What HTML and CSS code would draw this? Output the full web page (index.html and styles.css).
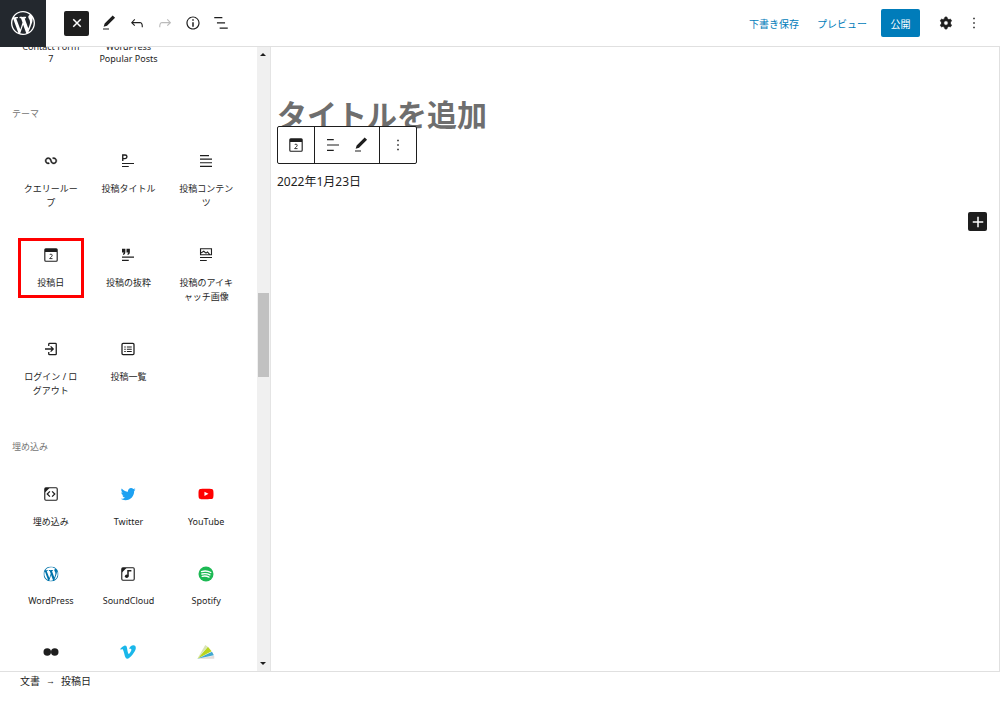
FILE: index.html
```html
<!DOCTYPE html>
<html lang="ja">
<head>
<meta charset="utf-8">
<meta name="viewport" content="width=device-width, initial-scale=1">
<title>投稿を編集</title>
<link rel="stylesheet" href="styles.css">
</head>
<body>
<svg class="defs" aria-hidden="true">
  <symbol id="wp" viewBox="0 0 20 20"><path d="M20 10c0-5.51-4.49-10-10-10C4.48 0 0 4.49 0 10c0 5.52 4.48 10 10 10 5.51 0 10-4.48 10-10zM7.78 15.37L4.37 6.22c.55-.02 1.17-.08 1.17-.08.5-.06.44-1.13-.06-1.11 0 0-1.45.11-2.37.11-.18 0-.37 0-.58-.01C4.12 2.69 6.87 1.11 10 1.11c2.33 0 4.45.87 6.05 2.34-.68-.11-1.65.39-1.65 1.58 0 .74.45 1.36.9 2.1.35.61.55 1.36.55 2.46 0 1.49-1.4 5-1.4 5l-3.03-8.37c.54-.02.82-.17.82-.17.5-.05.44-1.25-.06-1.22 0 0-1.44.12-2.38.12-.87 0-2.33-.12-2.33-.12-.5-.03-.56 1.2-.06 1.22l.92.08 1.26 3.41zM17.41 10c.24-.64.74-1.87.43-4.25.7 1.29 1.05 2.71 1.05 4.25 0 3.29-1.73 6.24-4.4 7.78.97-2.59 1.94-5.2 2.92-7.78zM6.1 18.09C3.12 16.65 1.11 13.53 1.11 10c0-1.3.23-2.48.72-3.59C3.25 10.3 4.67 14.2 6.1 18.09zm4.03-6.63l2.58 6.98c-.86.29-1.76.45-2.71.45-.79 0-1.57-.11-2.29-.33.81-2.38 1.62-4.74 2.42-7.1z"/></symbol>
  <symbol id="edit" viewBox="0 0 24 24"><path d="M20.1 5.1L16.9 2 6.2 12.7l-1.3 4.4 4.5-1.3L20.1 5.1zM4 20.8h8v-1.5H4v1.5z"/></symbol>
  <symbol id="more" viewBox="0 0 24 24"><path d="M13 19h-2v-2h2v2zm0-6h-2v-2h2v2zm0-6h-2V5h2v2z"/></symbol>
  <symbol id="date" viewBox="0 0 24 24"><path fill-rule="evenodd" d="M5 3h14a2 2 0 0 1 2 2v14a2 2 0 0 1-2 2H5a2 2 0 0 1-2-2V5a2 2 0 0 1 2-2zm-.5 5v11c0 .3.2.5.5.5h14c.3 0 .5-.2.5-.5V8z"/><path fill="none" stroke="currentColor" stroke-width="1.2" d="M10.2 11.800c.2-1 3.400-1.600 3.400.7 0 1.500-2.300 2.500-3.400 4.300h3.800"/></symbol>
</svg>
<div class="app">
  <header class="header">
    <a class="logo" href="#" aria-label="WordPress"><svg><use href="#wp"/></svg></a>
    <div class="tools">
      <button class="close" aria-label="閉じる"><svg class="icon" viewBox="0 0 24 24"><path fill="none" stroke="currentColor" stroke-width="2" d="M7 7l10 10M17 7L7 17"/></svg></button>
      <div class="tool-row">
        <button aria-label="編集"><svg class="icon"><use href="#edit"/></svg></button>
        <button aria-label="元に戻す"><svg class="icon" viewBox="0 0 24 24"><path d="M18.3 11.7c-.6-.6-1.400-.9-2.300-.9H6.700l2.900-3.300-1.100-1-4.500 5L8.500 16l1-1-2.700-2.700H16c.5 0 .9.2 1.300.5 1 1 1 3.400 1 4.500v.3h1.500v-.2c0-1.500 0-4.300-1.500-5.700z"/></svg></button>
        <button aria-label="やり直す" disabled><svg class="icon" viewBox="0 0 24 24"><path d="M15.600 6.500l-1.100 1 2.900 3.300H8c-.9 0-1.700.3-2.300.9-1.400 1.500-1.400 4.200-1.400 5.600v.2h1.500v-.3c0-1.100 0-3.500 1-4.500.3-.3.7-.5 1.300-.5h9.200L14.500 15l1.100 1.100 4.600-4.600-4.600-5z"/></svg></button>
        <button aria-label="詳細"><svg class="icon" viewBox="0 0 24 24"><path d="M12 3.200c-4.800 0-8.800 3.900-8.800 8.800 0 4.800 3.900 8.800 8.800 8.800 4.800 0 8.800-3.900 8.800-8.800 0-4.800-4-8.800-8.800-8.800zm0 16c-4 0-7.200-3.300-7.200-7.200C4.800 8 8 4.800 12 4.800s7.200 3.300 7.200 7.200c0 4-3.200 7.200-7.200 7.200zM11 17h2v-6h-2v6zm0-8h2V7h-2v2z"/></svg></button>
        <button aria-label="リスト表示"><svg class="icon" viewBox="0 0 24 24"><path d="M13.800 4H3v1.600h10.800V4zm-3.600 14v1.600H21V18H10.200zm7.200-7H6.600v1.600h10.800V11z"/></svg></button>
      </div>
    </div>
    <div class="actions">
      <button class="text-button">下書き保存</button>
      <button class="text-button">プレビュー</button>
      <button class="publish">公開</button>
      <div class="settings">
        <button aria-label="設定"><svg class="icon" viewBox="0 0 24 24"><path fill-rule="evenodd" d="M10.289 4.836A1 1 0 0111.275 4h1.306a1 1 0 01.987.836l.244 1.466c.787.26 1.503.679 2.108 1.218l1.393-.522a1 1 0 011.216.437l.653 1.130a1 1 0 01-.23 1.273l-1.148.944a6.025 6.025 0 010 2.435l1.149.946a1 1 0 01.23 1.272l-.653 1.130a1 1 0 01-1.216.437l-1.394-.522c-.605.54-1.320.958-2.108 1.218l-.244 1.466a1 1 0 01-.987.836h-1.306a1 1 0 01-.986-.836l-.244-1.466a5.995 5.995 0 01-2.108-1.218l-1.394.522a1 1 0 01-1.217-.436l-.653-1.131a1 1 0 01.23-1.272l1.149-.946a6.026 6.026 0 010-2.435l-1.148-.944a1 1 0 01-.23-1.272l.653-1.131a1 1 0 011.217-.437l1.393.522a5.994 5.994 0 012.108-1.218l.244-1.466zM14.929 12a3 3 0 11-6 0 3 3 0 016 0z" stroke="currentColor"/></svg></button>
        <button aria-label="オプション"><svg class="icon"><use href="#more"/></svg></button>
      </div>
    </div>
  </header>

  <div class="body">
    <aside class="sidebar">
      <div class="blocks">
        <div class="grid latin clipped">
          <button class="block"><span>Contact Form 7</span></button>
          <button class="block"><span>WordPress Popular Posts</span></button>
        </div>
        <h2>テーマ</h2>
        <div class="grid">
          <button class="block"><svg class="icon" viewBox="0 0 24 24"><path stroke="currentColor" stroke-width=".5" d="M18.182 11.639c0 1.441-1.168 2.610-2.609 2.610-1.215 0-2.238-.831-2.528-1.957l-.018-.059-.629-1.856h-.004c-.537-1.728-2.148-2.984-4.054-2.984-2.345 0-4.246 1.901-4.246 4.246s1.901 4.245 4.246 4.245c.545 0 1.068-.103 1.549-.292l-.597-1.522c-.294.115-.615.179-.952.179-1.442 0-2.610-1.169-2.610-2.610s1.168-2.609 2.610-2.609c1.215 0 2.237.831 2.527 1.956h.01l.593 1.745c.482 1.815 2.135 3.153 4.103 3.153 2.344 0 4.245-1.900 4.245-4.245s-1.901-4.245-4.245-4.245c-.544 0-1.066.103-1.547.291l.596 1.523c.294-.115.614-.178.951-.178 1.441 0 2.609 1.168 2.609 2.609z"/></svg><span>クエリーループ</span></button>
          <button class="block"><svg class="icon" viewBox="0 0 24 24"><path d="M4 14.500h16V16H4zM4 18.500h9V20H4z"/><path fill="none" stroke="currentColor" stroke-width="1.800" d="M5 12V4h3.200a2.300 2.300 0 0 1 0 4.800H5"/></svg><span>投稿タイトル</span></button>
          <button class="block"><svg class="icon" viewBox="0 0 24 24"><path d="M4 4h12v1.600H4zM4 8.700h16v1.600H4zM4 13.500h16v1.600H4zM4 18.300h16v1.600H4z"/></svg><span>投稿コンテンツ</span></button>
          <button class="block marked"><svg class="icon"><use href="#date"/></svg><span>投稿日</span></button>
          <button class="block"><svg class="icon" viewBox="0 0 24 24"><path d="M4 14h16v1.600H4zM4 18.300h9v1.600H4z"/><path d="M4 3.500h4.500V8c0 2-1 3.400-2.700 4l-.7-1.200c.9-.5 1.300-1.100 1.300-2H4zM10 3.500h4.500V8c0 2-1 3.400-2.700 4l-.7-1.200c.9-.5 1.300-1.100 1.300-2H10z"/></svg><span>投稿の抜粋</span></button>
          <button class="block"><svg class="icon" viewBox="0 0 24 24"><path d="M4 14.500h16V16H4zM4 18.500h9V20H4z"/><path fill="none" stroke="currentColor" stroke-width="1.500" d="M4.700 3.700h14.600v8H4.700zM5 9.500l4-2.500 3 2.500 2-1.500 3 3.500"/></svg><span>投稿のアイキャッチ画像</span></button>
          <button class="block"><svg class="icon" viewBox="0 0 24 24"><path fill="none" stroke="currentColor" stroke-width="1.700" d="M9 8V5.500c0-.6.4-1 1-1h8c.6 0 1 .4 1 1v13c0 .6-.4 1-1 1h-8c-.6 0-1-.4-1-1V16M4 12h10M11.500 8.500L15 12l-3.500 3.500"/></svg><span>ログイン / ログアウト</span></button>
          <button class="block"><svg class="icon" viewBox="0 0 24 24"><rect x="4" y="4.500" width="16" height="15" rx="1.500" fill="none" stroke="currentColor" stroke-width="1.700"/><path d="M7 8.500h2V10H7zM10.500 8.500H17V10h-6.500zM7 11.500h2V13H7zM10.500 11.500H17V13h-6.500zM7 14.500h2V16H7zM10.500 14.500H17V16h-6.500z"/></svg><span>投稿一覧</span></button>
        </div>
        <h2>埋め込み</h2>
        <div class="grid">
          <button class="block"><svg class="icon" viewBox="0 0 24 24"><rect x="3.700" y="3.700" width="16.600" height="16.600" rx="1.500" fill="none" stroke="currentColor" stroke-width="1.500"/><path d="M4 4h6l-6 6z"/><path fill="none" stroke="currentColor" stroke-width="1.700" d="M10.500 8.500L7 12l3.500 3.500M13.500 8.500L17 12l-3.500 3.500"/></svg><span>埋め込み</span></button>
          <button class="block"><svg class="icon twitter" viewBox="0 0 24 24"><path d="M22.230 5.924c-.736.326-1.527.547-2.357.646.847-.508 1.498-1.312 1.804-2.270-.793.470-1.670.812-2.606.996C18.324 4.498 17.257 4 16.077 4c-2.266 0-4.103 1.837-4.103 4.103 0 .322.036.635.106.935-3.410-.170-6.433-1.804-8.457-4.287-.353.607-.556 1.312-.556 2.064 0 1.424.724 2.680 1.825 3.415-.673-.022-1.305-.207-1.860-.514v.052c0 1.988 1.415 3.647 3.293 4.023-.344.095-.707.145-1.080.145-.265 0-.522-.026-.773-.074.522 1.630 2.038 2.817 3.833 2.850-1.404 1.100-3.174 1.757-5.096 1.757-.332 0-.660-.020-.980-.057 1.816 1.164 3.973 1.843 6.290 1.843 7.547 0 11.675-6.252 11.675-11.675 0-.178-.004-.355-.012-.530.802-.578 1.497-1.300 2.047-2.124z"/></svg><span>Twitter</span></button>
          <button class="block"><svg class="icon youtube" viewBox="0 0 24 24"><path d="M21.800 8s-.195-1.377-.795-1.984c-.760-.797-1.613-.800-2.004-.847-2.798-.203-6.996-.203-6.996-.203h-.010s-4.197 0-6.996.202c-.390.046-1.242.050-2.003.846C2.395 6.623 2.200 8 2.200 8S2 9.620 2 11.240v1.517c0 1.618.200 3.237.200 3.237s.195 1.378.795 1.985c.760.797 1.760.770 2.205.855 1.600.153 6.800.200 6.800.200s4.203-.005 7-.208c.392-.047 1.244-.050 2.005-.847.600-.607.795-1.985.795-1.985s.200-1.618.200-3.237v-1.517C22 9.620 21.800 8 21.800 8zM9.935 14.595v-5.620l5.403 2.820-5.403 2.800z"/></svg><span>YouTube</span></button>
        </div>
        <div class="grid latin">
          <button class="block"><svg class="icon wordpress" viewBox="-2 -2 24 24"><use href="#wp" width="20" height="20"/></svg><span>WordPress</span></button>
          <button class="block"><svg class="icon" viewBox="0 0 24 24"><rect x="3.700" y="3.700" width="16.600" height="16.600" rx="1.500" fill="none" stroke="currentColor" stroke-width="1.500"/><path d="M4 4h6l-6 6z"/><circle cx="10.300" cy="15" r="2.400"/><path d="M11 6.500h5.500v2.300H13V15h-2z"/></svg><span>SoundCloud</span></button>
          <button class="block"><svg class="icon spotify" viewBox="0 0 24 24"><circle cx="12" cy="12" r="10"/><path fill="none" stroke="#fff" stroke-width="1.800" stroke-linecap="round" d="M6 8.800c4-1.200 8.800-.8 12.400 1.200M6.500 12c3.500-1 7.500-.6 10.700 1.200M7 15.100c3-.7 6.300-.4 9 1.100"/></svg><span>Spotify</span></button>
        </div>
        <div class="grid latin">
          <button class="block" aria-label="Flickr"><svg class="icon" viewBox="0 0 24 24"><circle cx="7" cy="12" r="5"/><circle cx="17" cy="12" r="5"/></svg></button>
          <button class="block" aria-label="Vimeo"><svg class="icon vimeo" viewBox="0 0 24 24"><path d="M22.396 7.164c-.093 2.026-1.507 4.800-4.245 8.320C15.322 19.160 12.928 21 10.970 21c-1.214 0-2.240-1.120-3.080-3.360-.560-2.052-1.118-4.105-1.680-6.158-.622-2.240-1.290-3.360-2.004-3.360-.156 0-.700.328-1.634.980l-.978-1.260c1.027-.903 2.040-1.806 3.037-2.710C6 3.950 7.030 3.328 7.716 3.265c1.620-.156 2.616.950 2.990 3.320.404 2.558.685 4.148.840 4.770.468 2.120.982 3.180 1.543 3.180.435 0 1.090-.687 1.963-2.064.872-1.376 1.340-2.422 1.402-3.142.125-1.187-.343-1.782-1.400-1.782-.500 0-1.013.115-1.542.340 1.023-3.350 2.977-4.976 5.862-4.883 2.140.063 3.148 1.450 3.024 4.160z"/></svg></button>
          <button class="block" aria-label="Animoto"><svg class="icon" viewBox="0 0 24 24"><path fill="#e3dcd9" d="M.5 21L23 17v4z"/><path fill="#42a8cf" d="M.5 21L20 11.500l2.500 4.800z"/><path fill="#b9d51f" d="M.5 21L14.500 5l5 6z"/><path fill="#d9e5b5" d="M.5 21L11 2.500 14.300 5z"/></svg></button>
        </div>
      </div>
      <div class="scrollbar" aria-hidden="true">
        <svg viewBox="0 0 12 12"><path d="M3 8l3-3 3 3z"/></svg>
        <div class="track"><div class="thumb"></div></div>
        <svg viewBox="0 0 12 12"><path d="M3 4l3 3 3-3z"/></svg>
      </div>
    </aside>

    <main class="canvas">
      <input class="title" type="text" aria-label="タイトルを追加" placeholder="タイトルを追加">
      <div class="date-block">
        <div class="toolbar">
          <div class="group single"><button aria-label="投稿日"><svg class="icon"><use href="#date"/></svg></button></div>
          <div class="group">
            <button aria-label="配置"><svg class="icon" viewBox="0 0 24 24"><path d="M4 4h9v1.600H4zM4 11.200h16v1.600H4zM4 18.400h9V20H4z"/></svg></button>
            <button aria-label="編集"><svg class="icon"><use href="#edit"/></svg></button>
          </div>
          <div class="group single"><button aria-label="オプション"><svg class="icon"><use href="#more"/></svg></button></div>
        </div>
        <time datetime="2022-01-23">2022年1月23日</time>
      </div>
      <button class="inserter" aria-label="ブロックを追加"><svg class="icon" viewBox="0 0 24 24"><path fill="none" stroke="currentColor" stroke-width="2" d="M12 5v14M5 12h14"/></svg></button>
    </main>
  </div>

  <footer class="footer">
    <button>文書</button><span class="arrow">→</span><button>投稿日</button>
  </footer>
</div>
</body>
</html>
```

FILE: styles.css
```css
* { box-sizing: border-box; }

body {
  margin: 0;
  background: #fff;
  color: #1e1e1e;
  font-family: "Noto Sans", "Noto Sans CJK JP", sans-serif;
  font-size: 10px;
}

button {
  display: flex;
  align-items: center;
  justify-content: center;
  margin: 0;
  padding: 0;
  border: 0;
  background: none;
  color: inherit;
  font: inherit;
}

svg { display: block; fill: currentColor; }
.defs { position: absolute; width: 0; height: 0; }
.icon { width: 18px; height: 18px; flex: none; }

.app { display: flex; flex-direction: column; height: 100vh; }

.header {
  display: flex;
  align-items: center;
  height: 47px;
  flex: none;
  border-bottom: 1px solid #e0e0e0;
}
.logo {
  display: flex;
  align-items: center;
  justify-content: center;
  width: 46px;
  height: 47px;
  background: #23282e;
  color: #fff;
}
.logo svg { width: 24px; height: 24px; }
.tools { display: flex; align-items: center; gap: 6px; padding-left: 18px; }
.tool-row { display: flex; }
.tool-row button { width: 28px; height: 28px; }
.tool-row button:disabled { color: #bbb; }
.close { width: 25px; height: 25px; border-radius: 2px; background: #1e1e1e; color: #fff; }

.actions { display: flex; align-items: center; margin-left: auto; padding-right: 12px; }
.text-button { margin-right: 18px; color: #007cba; }
.text-button + .publish { margin-left: -4px; }
.publish {
  width: 39px;
  height: 28px;
  border-radius: 2px;
  background: #007cba;
  color: #fff;
}
.settings { display: flex; padding-left: 12px; }
.settings button { width: 28px; height: 28px; }

.body { display: flex; flex: 1; min-height: 0; }

.sidebar {
  display: flex;
  width: 271px;
  flex: none;
  border-right: 1px solid #e4e4e4;
  overflow: hidden;
}
.blocks { flex: 1; min-width: 0; padding: 0 12px; overflow: hidden; }
.blocks h2 {
  margin: 0;
  padding: 24px 0 13px;
  color: #757575;
  font-size: 9px;
  font-weight: 400;
  line-height: 14px;
}
.grid { display: grid; grid-template-columns: repeat(3, 1fr); align-items: start; }
.block {
  flex-direction: column;
  justify-content: flex-start;
  gap: 12px;
  min-width: 0;
  margin: 10px 6px;
  padding: 5px 1px;
  border: 3px solid transparent;
  font-size: 9px;
  line-height: 14px;
  text-align: center;
  word-break: break-all;
}
.block span { max-width: 100%; }
.latin .block { margin: 10px 4px; line-height: 12px; word-break: normal; }
.clipped { margin-top: -24px; }
.marked { border-color: #f00; }
.twitter { color: #1da1f2; }
.youtube { color: #f00; }
.wordpress { color: #0073aa; }
.spotify { color: #1db954; }
.vimeo { color: #1ab7ea; }

.scrollbar {
  display: flex;
  flex-direction: column;
  width: 13px;
  background: #f0f0f0;
}
.scrollbar svg { width: 12px; height: 14px; }
.track { flex: 1; padding: 0 1px; }
.track::before { content: ""; display: block; height: 39%; }
.thumb { height: 14%; background: #c1c1c1; }

.canvas {
  flex: 1;
  min-width: 0;
  padding: 43px 12px 0 6px;
  border-right: 1px solid #e0e0e0;
}
.title {
  display: block;
  width: 100%;
  height: 48px;
  padding: 0;
  border: 0;
  outline: 0;
  background: none;
  color: #1e1e1e;
  font: inherit;
  font-size: 30px;
  font-weight: 700;
}
.title::placeholder { color: #6e6e6e; opacity: 1; }
.date-block { position: relative; padding-top: 35px; font-size: 12px; line-height: 18px; }
.date-block time { display: block; }
.toolbar {
  position: absolute;
  bottom: 27px;
  left: 0;
  display: flex;
  height: 38px;
  border: 1px solid #1e1e1e;
  border-radius: 2px;
  background: #fff;
}
.group { display: flex; padding: 0 4px; }
.group + .group { border-left: 1px solid #1e1e1e; }
.group button { width: 28px; }
.inserter {
  width: 19px;
  height: 19px;
  margin: 21px 0 0 auto;
  border-radius: 2px;
  background: #1e1e1e;
  color: #fff;
}

.footer {
  display: flex;
  align-items: flex-start;
  gap: 6px;
  height: 44px;
  flex: none;
  padding: 1px 20px;
  border-top: 1px solid #e0e0e0;
  line-height: 16px;
}
.arrow { font-family: "Liberation Sans", sans-serif; font-size: 9px; }
```
